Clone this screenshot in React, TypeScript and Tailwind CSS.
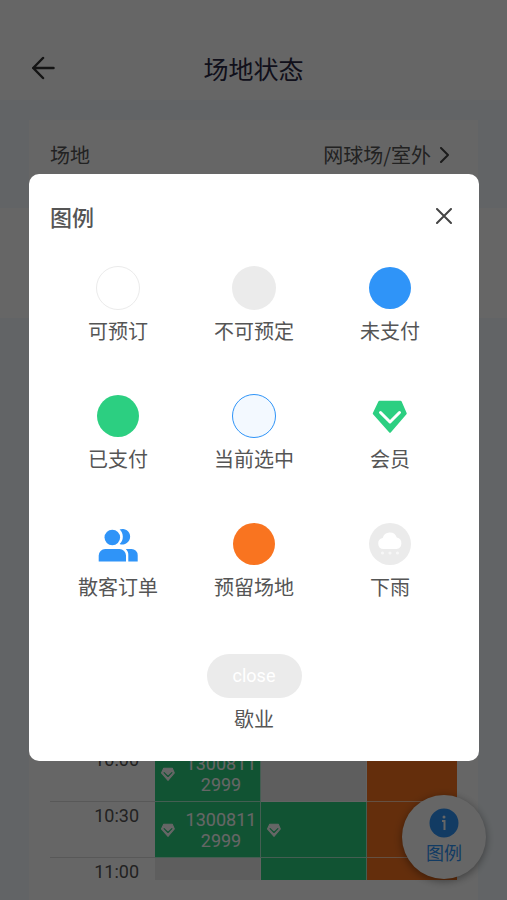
import { useState } from 'react'
import type { ReactNode } from 'react'

type CellKind = 'paid' | 'off' | 'reserved'

interface Cell {
  kind: CellKind
  member?: boolean
  phone?: string
}

interface Slot {
  time: string
  cells: Cell[]
}

const SLOTS: Slot[] = [
  {
    time: '10:00',
    cells: [{ kind: 'paid', member: true, phone: '13008112999' }, { kind: 'off' }, { kind: 'reserved' }],
  },
  {
    time: '10:30',
    cells: [{ kind: 'paid', member: true, phone: '13008112999' }, { kind: 'paid', member: true }, { kind: 'reserved' }],
  },
  {
    time: '11:00',
    cells: [{ kind: 'off' }, { kind: 'paid' }, { kind: 'reserved' }],
  },
]

const CELL_BG: Record<CellKind, string> = {
  paid: 'bg-[#2ccf81]',
  off: 'bg-[#ebebeb]',
  reserved: 'bg-[#f97420]',
}

function Diamond({ className, check }: { className: string; check: string }) {
  return (
    <svg viewBox="0 0 44 44" className={className} aria-hidden="true">
      <path
        d="M11.5 8h21l5 11.5L22 37.500 6 19.500z"
        fill="currentColor"
        stroke="currentColor"
        strokeWidth="2.500"
        strokeLinejoin="round"
      />
      <path d="M12.500 18.500l9.500 9.500 9.500-9.500" fill="none" stroke={check} strokeWidth="3" strokeLinecap="round" strokeLinejoin="round" />
    </svg>
  )
}

function Users() {
  return (
    <svg viewBox="0 0 44 44" className="size-11" fill="#2f94f8" aria-hidden="true">
      <circle cx="16.300" cy="15.500" r="7.800" />
      <path d="M23.600 7.400A7.800 7.800 0 1 1 23.600 22A9.900 9.900 0 0 0 23.600 7.400z" />
      <path d="M2.700 39.500V33.500a6.500 6.500 0 0 1 6.500-6.500H23.500a6.500 6.500 0 0 1 6.500 6.500v6z" />
      <path d="M29.800 27H35.500a6.200 6.200 0 0 1 6.200 6.200v6.300H32.300V33.500a8 8 0 0 0-2.500-6.500z" />
    </svg>
  )
}

function Rain() {
  return (
    <svg viewBox="0 0 44 44" className="size-11" aria-hidden="true">
      <circle cx="22" cy="22" r="21" fill="#ebebeb" />
      <g fill="#fff">
        <path d="M15.500 27a5.500 5.500 0 0 1-.8-10.900A7.300 7.300 0 0 1 28.800 15.600A5.800 5.800 0 0 1 28.500 27z" />
        <circle cx="14.500" cy="31" r="1.600" fillOpacity=".6" />
        <circle cx="22" cy="31" r="1.600" fillOpacity=".6" />
        <circle cx="29.500" cy="31" r="1.600" fillOpacity=".6" />
      </g>
    </svg>
  )
}

function Dot({ className }: { className: string }) {
  return <span className={`block rounded-full ${className}`} />
}

const LEGEND: { label: string; icon: ReactNode }[] = [
  { label: '可预订', icon: <Dot className="size-11 border border-[#ebebeb] bg-white" /> },
  { label: '不可预定', icon: <Dot className="size-11 bg-[#ebebeb]" /> },
  { label: '未支付', icon: <Dot className="size-[42px] bg-[#2f94f8]" /> },
  { label: '已支付', icon: <Dot className="size-[42px] bg-[#2ccf81]" /> },
  { label: '当前选中', icon: <Dot className="size-11 border border-[#2f94f8] bg-[#f3f9ff]" /> },
  { label: '会员', icon: <Diamond className="size-11 text-[#2ccf81]" check="#fff" /> },
  { label: '散客订单', icon: <Users /> },
  { label: '预留场地', icon: <Dot className="size-[42px] bg-[#f97420]" /> },
  { label: '下雨', icon: <Rain /> },
]

function Schedule() {
  return (
    <div className="flex flex-1 flex-col justify-end font-[Roboto,sans-serif] text-lg">
      {SLOTS.map((slot, i) => {
        const last = i === SLOTS.length - 1
        return (
          <div key={slot.time} className={`flex shrink-0 ${last ? 'h-[22px]' : 'h-14'}`}>
            <div className={`w-[105px] shrink-0 border-[#dcdcdc] pr-4 text-right leading-7 text-[#555] ${last ? '' : 'border-b'}`}>
              {slot.time}
            </div>
            {slot.cells.map((cell, j) => (
              <div
                key={j}
                className={`flex items-center border-white/60 pl-1 ${j === 2 ? 'flex-1' : 'w-[106px] shrink-0 border-r'} ${last ? '' : 'border-b'} ${CELL_BG[cell.kind]}`}
              >
                {cell.member && <Diamond className="size-[18px] shrink-0 text-white" check="#2ccf81" />}
                {cell.phone && (
                  <span className="ml-2 w-[72px] shrink-0 text-center leading-[21px] break-all text-white">{cell.phone}</span>
                )}
              </div>
            ))}
          </div>
        )
      })}
    </div>
  )
}

export default function App() {
  const [open, setOpen] = useState(true)

  return (
    <div className="relative flex h-screen flex-col overflow-hidden bg-[#f5fbff] font-['Noto_Sans_CJK_SC',sans-serif] text-xl text-[#555]">
      <header className="flex h-[100px] shrink-0 items-end bg-white px-8 pb-3">
        <button aria-label="返回" className="flex h-10 w-6 items-center">
          <svg viewBox="0 0 24 24" className="size-6" fill="none" stroke="#333" strokeWidth="2.500" strokeLinecap="round" strokeLinejoin="round">
            <path d="M11 2L1.200 12l9.800 10M1.200 12H21.500" />
          </svg>
        </button>
        <h1 className="mr-6 flex-1 text-center text-[25px] leading-10 text-[#2b2a45]">场地状态</h1>
      </header>

      <section className="mx-[29px] mt-5 h-[88px] shrink-0 bg-white px-[21px]">
        <button className="flex w-full items-center pt-[19px] leading-8">
          <span>场地</span>
          <span className="ml-auto">网球场/室外</span>
          <svg viewBox="0 0 16 16" className="mr-1 ml-1.5 size-4" fill="none" stroke="#444" strokeWidth="2" strokeLinecap="round" strokeLinejoin="round">
            <path d="M4 1l7 7-7 7" />
          </svg>
        </button>
      </section>
      <section className="h-[110px] shrink-0 bg-white" />

      <section className="mx-[29px] flex flex-1 flex-col bg-white px-[21px] pb-5">
        <Schedule />
      </section>

      <button
        onClick={() => setOpen(true)}
        className="absolute right-[21px] bottom-[21px] flex size-[84px] flex-col items-center justify-center rounded-full bg-white text-lg leading-7 text-[#2f94f8] shadow-[0_2px_8px_rgba(0,0,0,0.4)]"
      >
        <svg viewBox="0 0 30 30" className="size-[30px]" aria-hidden="true">
          <circle cx="15" cy="15" r="14.500" fill="#2f94f8" />
          <circle cx="15" cy="9" r="1.500" fill="#fff" />
          <path d="M13 13h2.500v9" fill="none" stroke="#fff" strokeWidth="2" />
        </svg>
        图例
      </button>

      {open && (
        <div className="absolute inset-0 flex items-start bg-black/60 pt-[174px] pr-7 pl-[29px]">
          <div role="dialog" aria-label="图例" className="w-full rounded-[10px] bg-white px-[21px] pt-[22px] pb-[29px]">
            <div className="flex h-10 items-center justify-between">
              <h2 className="text-[22px] font-medium">图例</h2>
              <button aria-label="关闭" onClick={() => setOpen(false)} className="mr-1.5">
                <svg viewBox="0 0 16 16" className="size-4" stroke="#444" strokeWidth="2" strokeLinecap="round">
                  <path d="M1 1l14 14M15 1L1 15" />
                </svg>
              </button>
            </div>
            <ul className="mt-[30px] grid grid-cols-3 gap-y-[50px]">
              {LEGEND.map((item) => (
                <li key={item.label} className="flex flex-col items-center">
                  <span className="flex size-11 items-center justify-center">{item.icon}</span>
                  <span className="mt-2 leading-[26px]">{item.label}</span>
                </li>
              ))}
            </ul>
            <div className="mt-[54px] flex flex-col items-center">
              <span className="flex h-11 w-[95px] items-center justify-center rounded-full bg-[#ebebeb] font-[Roboto,sans-serif] text-lg text-white">
                close
              </span>
              <span className="mt-2 leading-[26px]">歇业</span>
            </div>
          </div>
        </div>
      )}
    </div>
  )
}
